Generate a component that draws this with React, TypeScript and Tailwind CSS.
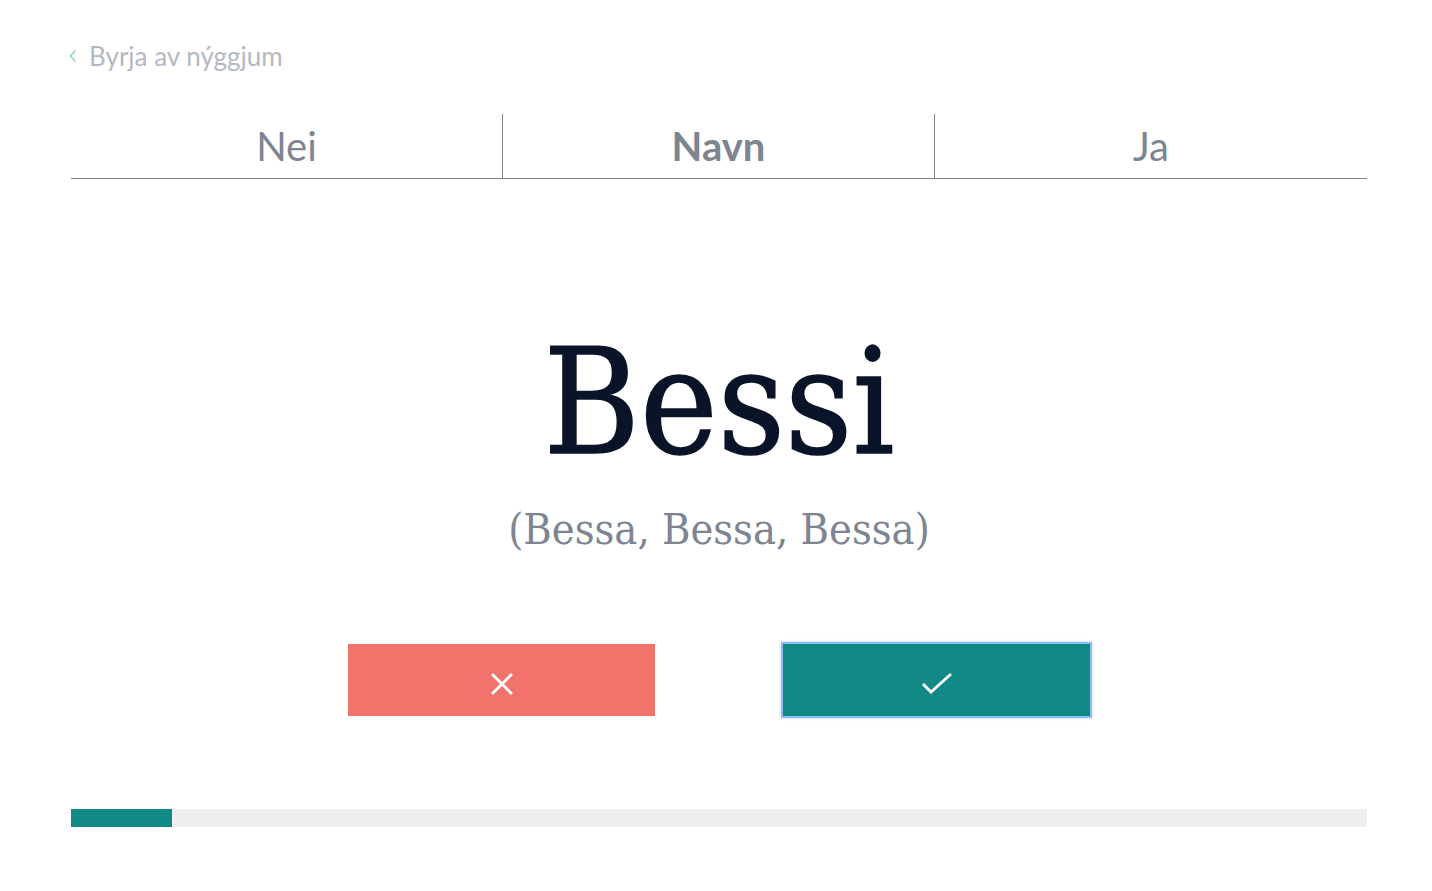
import React from "react";

export default function App() {
  return (
    <div className="min-h-screen bg-white" style={{ fontFamily: "Lato, 'Open Sans', sans-serif" }}>
      <div className="ml-[71px] w-[1296px] pt-[40px]">
        <div className="flex h-[32px] items-center">
          <svg width="10" height="14" viewBox="0 0 10 14" className="-ml-[3px] mr-[11px]">
            <path d="M7.5 1.5 L2.5 7 L7.5 12.5" fill="none" stroke="#8fcfcb" strokeWidth="1.5" />
          </svg>
          <span className="text-[26px] font-normal text-[#b4b8c2]">Byrja av nýggjum</span>
        </div>
        <div className="mt-[42px] grid h-[65px] grid-cols-3 border-b border-[#7d8592]">
          <div className="flex items-center justify-center border-r border-[#7d8592] text-[40px] font-normal text-[#7d8592]">Nei</div>
          <div className="flex items-center justify-center border-r border-[#7d8592] text-[40px] font-bold text-[#7d8592]">Navn</div>
          <div className="flex items-center justify-center text-[40px] font-normal text-[#7d8592]">Ja</div>
        </div>
        <div
          className="mt-[150px] text-center text-[146px] leading-none text-[#0a1429] [-webkit-text-stroke:1.5px_#0a1429]"
          style={{ fontFamily: "'DejaVu Serif Condensed', 'DejaVu Serif', serif" }}
        >
          Bessi
        </div>
        <div
          className="mt-[33px] text-center text-[43px] leading-none text-[#7d8592]"
          style={{ fontFamily: "'DejaVu Serif Condensed', 'DejaVu Serif', serif" }}
        >
          (Bessa, Bessa, Bessa)
        </div>
        <div className="mt-[93px] flex justify-center gap-[128px]">
          <button className="flex h-[72px] w-[307px] items-center justify-center bg-[#f1736c] pt-[8px]">
            <svg width="24" height="24" viewBox="0 0 24 24">
              <path d="M2 2 L22 22 M22 2 L2 22" stroke="white" strokeWidth="2.8" />
            </svg>
          </button>
          <button className="flex h-[72px] w-[307px] items-center justify-center bg-[#118a87] pt-[8px] outline-2 outline-offset-0 outline-[#8cbcf2] outline shadow-[0_0_3px_2px_#b9d6f7]">
            <svg width="32" height="24" viewBox="0 0 32 24">
              <path d="M2 12 L10 20 L30 2" fill="none" stroke="white" strokeWidth="2.8" />
            </svg>
          </button>
        </div>
        <div className="mt-[93px] flex h-[18px] w-full bg-[#efefef]">
          <div className="h-full w-[101px] bg-[#118a87]" />
        </div>
      </div>
    </div>
  );
}
